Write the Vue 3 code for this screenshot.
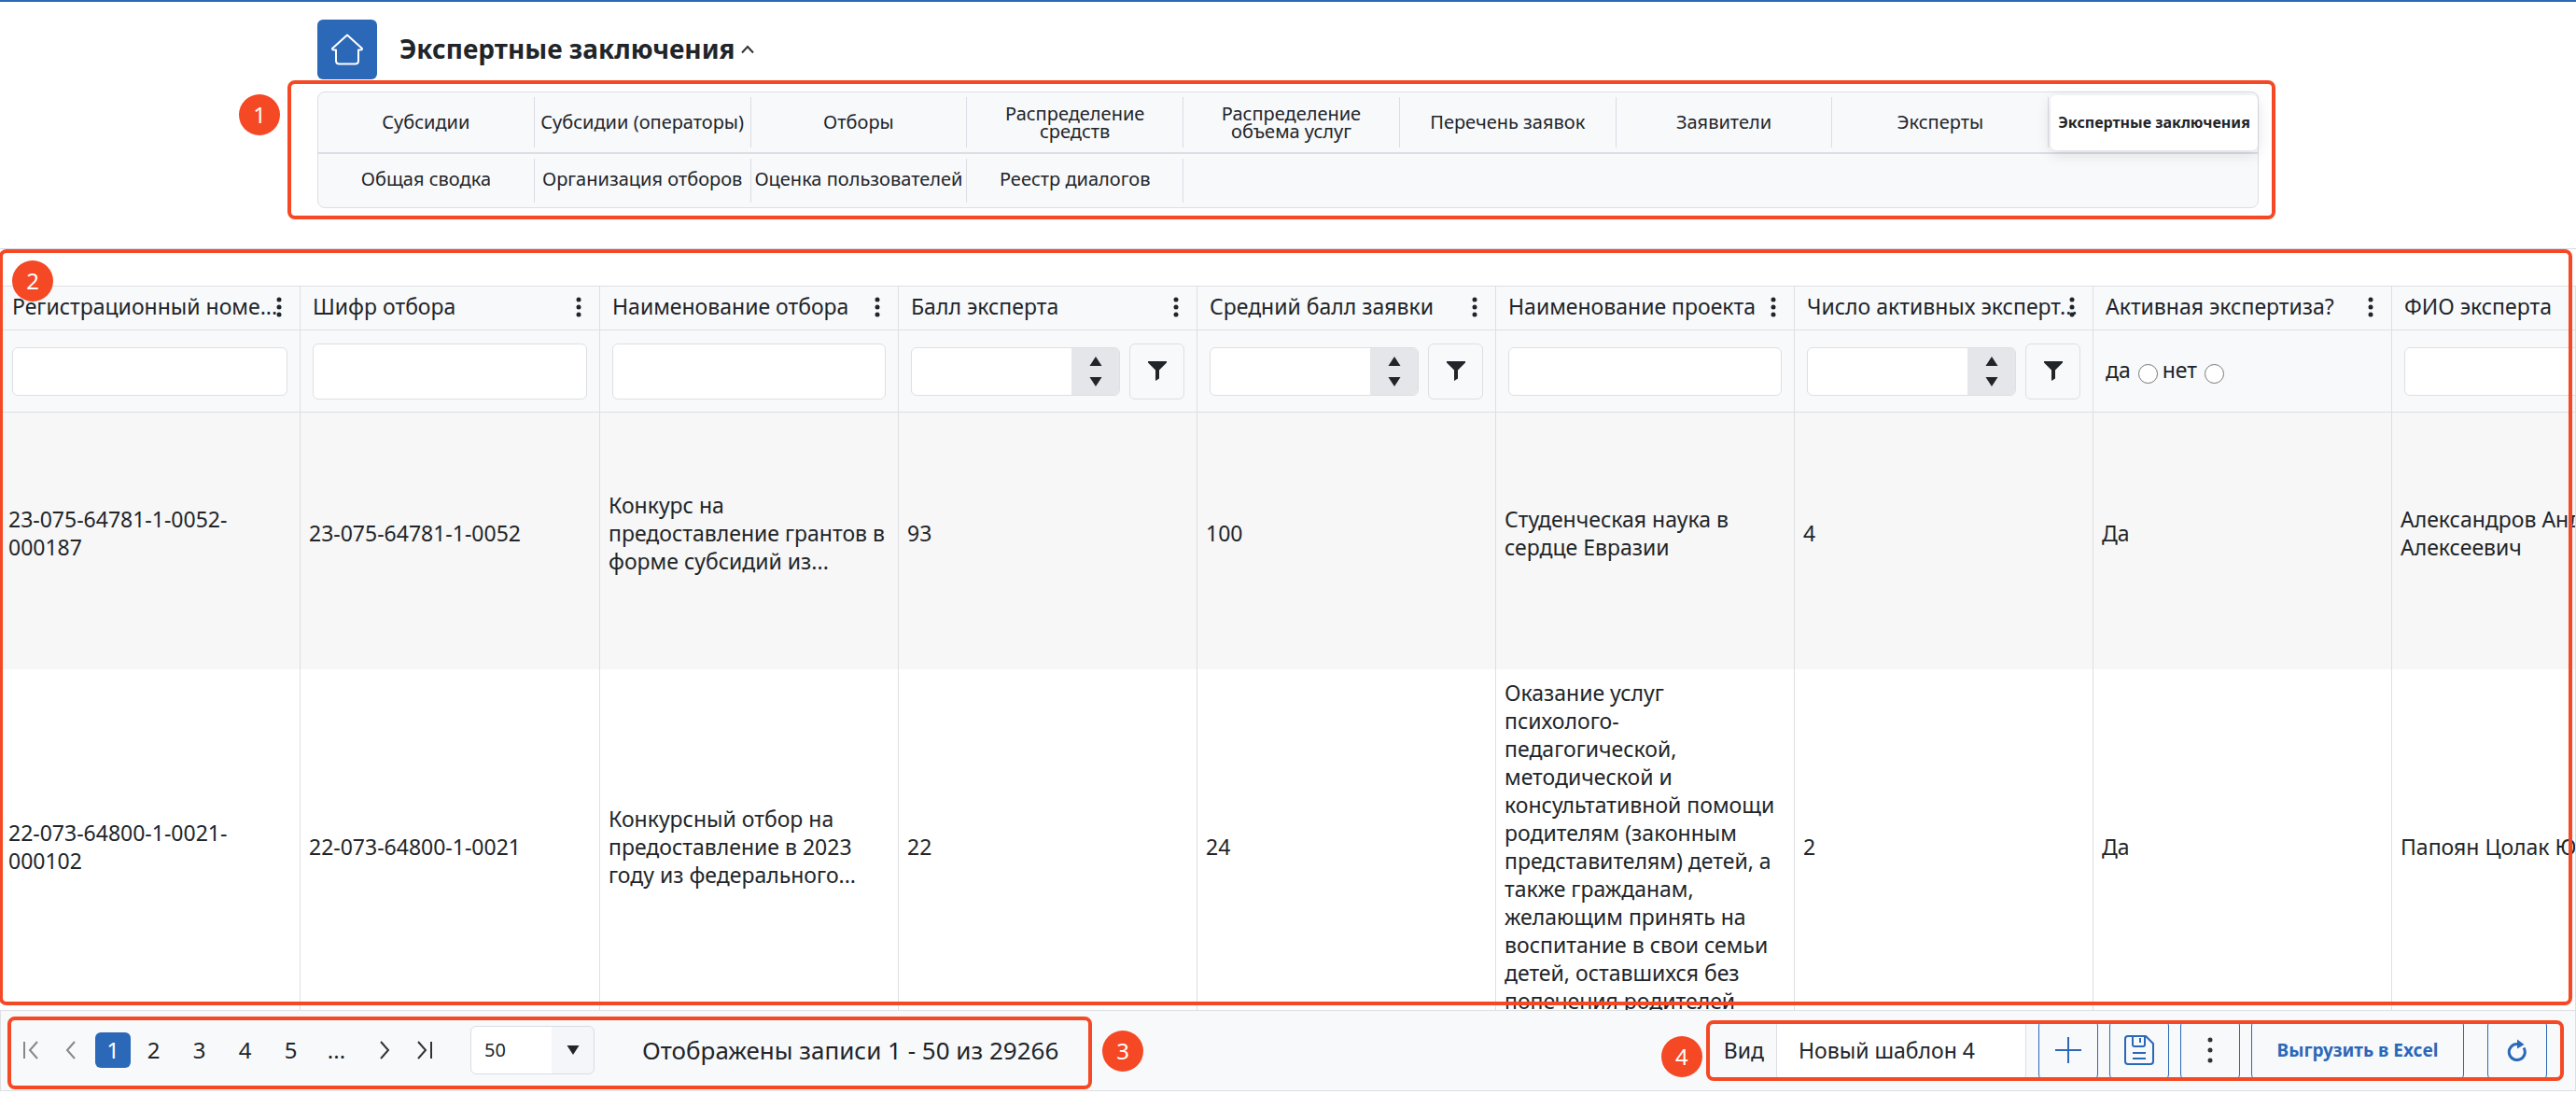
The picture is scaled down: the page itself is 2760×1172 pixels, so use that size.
<script setup>
import { ref } from 'vue'

const sections = [
  ['Субсидии', 'Субсидии (операторы)', 'Отборы', 'Распределение средств', 'Распределение объема услуг', 'Перечень заявок', 'Заявители', 'Эксперты', 'Экспертные заключения'],
  ['Общая сводка', 'Организация отборов', 'Оценка пользователей', 'Реестр диалогов'],
]
const activeSection = 'Экспертные заключения'

const columns = [
  { key: 'reg', title: 'Регистрационный номе...', filter: 'text' },
  { key: 'code', title: 'Шифр отбора', filter: 'text', tall: true },
  { key: 'selection', title: 'Наименование отбора', filter: 'text', tall: true },
  { key: 'score', title: 'Балл эксперта', filter: 'number' },
  { key: 'average', title: 'Средний балл заявки', filter: 'number' },
  { key: 'project', title: 'Наименование проекта', filter: 'text' },
  { key: 'count', title: 'Число активных эксперт...', filter: 'number' },
  { key: 'active', title: 'Активная экспертиза?', filter: 'radio' },
  { key: 'expert', title: 'ФИО эксперта', filter: 'text' },
]

const rows = [
  {
    reg: ['23-075-64781-1-0052-', '000187'],
    code: ['23-075-64781-1-0052'],
    selection: ['Конкурс на', 'предоставление грантов в', 'форме субсидий из...'],
    score: ['93'],
    average: ['100'],
    project: ['Студенческая наука в', 'сердце Евразии'],
    count: ['4'],
    active: ['Да'],
    expert: ['Александров Андрей', 'Алексеевич'],
  },
  {
    reg: ['22-073-64800-1-0021-', '000102'],
    code: ['22-073-64800-1-0021'],
    selection: ['Конкурсный отбор на', 'предоставление в 2023', 'году из федерального...'],
    score: ['22'],
    average: ['24'],
    project: ['Оказание услуг', 'психолого-', 'педагогической,', 'методической и', 'консультативной помощи', 'родителям (законным', 'представителям) детей, а', 'также гражданам,', 'желающим принять на', 'воспитание в свои семьи', 'детей, оставшихся без', 'попечения родителей'],
    count: ['2'],
    active: ['Да'],
    expert: ['Папоян Цолак Юрьевич'],
  },
]

const pages = ['1', '2', '3', '4', '5', '...']
const page = ref('1')
const template = ref('Новый шаблон 4')
</script>

<template>
  <div class="app">
    <header class="top">
      <div class="top-inner">
        <div class="heading">
          <a class="home" href="#" aria-label="На главную">
            <svg width="36" height="34" viewBox="0 0 36 34" fill="none" stroke="#fff" stroke-width="2" stroke-linejoin="round" stroke-linecap="round">
              <path d="M18 1.500 L34 16 Q34 17.500 32 17.500 H30 V29 Q30 32.500 26.500 32.500 H9.500 Q6 32.500 6 29 V17.500 H4 Q2 17.500 2 16 Z" />
            </svg>
          </a>
          <h1>Экспертные заключения</h1>
          <button class="collapse" aria-label="Свернуть">
            <svg width="14" height="10" viewBox="0 0 14 10" fill="none" stroke="#333" stroke-width="2"><path d="M1 8.500 L7 2 L13 8.500" /></svg>
          </button>
        </div>
        <nav class="sections">
          <div v-for="(line, i) in sections" :key="i" class="line">
            <a v-for="name in line" :key="name" href="#" class="section" :class="{ active: name === activeSection }"><span>{{ name }}</span></a>
          </div>
          <div class="frame frame-nav"></div>
          <div class="mark mark-1">1</div>
        </nav>
      </div>
    </header>

    <main class="grid">
      <div class="toolbar"></div>
      <div class="scroll">
        <table>
          <colgroup>
            <col v-for="c in columns" :key="c.key" :class="'col-' + c.key" />
          </colgroup>
          <thead>
            <tr class="titles">
              <th v-for="c in columns" :key="c.key">
                <div class="title">{{ c.title }}</div>
                <button class="menu" :aria-label="'Меню: ' + c.title">
                  <svg width="6" height="22" viewBox="0 0 6 22" fill="#212529"><circle cx="3" cy="3" r="2.500" /><circle cx="3" cy="11" r="2.500" /><circle cx="3" cy="19" r="2.500" /></svg>
                </button>
              </th>
            </tr>
            <tr class="filters">
              <td v-for="c in columns" :key="c.key">
                <input v-if="c.filter === 'text'" type="text" class="field" :class="{ tall: c.tall }" :aria-label="c.title" />
                <div v-else-if="c.filter === 'number'" class="number">
                  <div class="spin">
                    <input type="text" inputmode="numeric" :aria-label="c.title" />
                    <div class="arrows">
                      <button aria-label="Больше"><svg width="14" height="10" viewBox="0 0 14 10" fill="#212529"><path d="M7 0 L13.500 10 H0.500 Z" /></svg></button>
                      <button aria-label="Меньше"><svg width="14" height="10" viewBox="0 0 14 10" fill="#212529"><path d="M0.500 0 H13.500 L7 10 Z" /></svg></button>
                    </div>
                  </div>
                  <button class="funnel" aria-label="Фильтр">
                    <svg width="20" height="21" viewBox="0 0 20 21" fill="#212529"><path d="M0 0 H20 V1.500 L12 9.500 V18.500 L8 21 V9.500 L0 1.500 Z" /></svg>
                  </button>
                </div>
                <div v-else class="choice">
                  <label>да <input type="radio" name="active" /></label>
                  <label>нет <input type="radio" name="active" /></label>
                </div>
              </td>
            </tr>
          </thead>
          <tbody>
            <tr v-for="(r, i) in rows" :key="i">
              <td v-for="c in columns" :key="c.key">
                <div v-for="t in r[c.key]" :key="t">{{ t }}</div>
              </td>
            </tr>
          </tbody>
        </table>
      </div>
      <div class="frame frame-grid"></div>
      <div class="mark mark-2">2</div>
    </main>

    <footer class="footer">
      <div class="pager">
        <button class="nav off" aria-label="Первая страница"><svg width="18" height="20" viewBox="0 0 18 20"><path d="M2 1 V19 M16 1 L8 10 L16 19" /></svg></button>
        <button class="nav off" aria-label="Предыдущая страница"><svg width="12" height="20" viewBox="0 0 12 20"><path d="M10 1 L2 10 L10 19" /></svg></button>
        <div class="pages">
          <button v-for="p in pages" :key="p" class="page" :class="{ current: p === page }" @click="page = p">{{ p }}</button>
        </div>
        <button class="nav" aria-label="Следующая страница"><svg width="12" height="20" viewBox="0 0 12 20"><path d="M2 1 L10 10 L2 19" /></svg></button>
        <button class="nav" aria-label="Последняя страница"><svg width="18" height="20" viewBox="0 0 18 20"><path d="M2 1 L10 10 L2 19 M16 1 V19" /></svg></button>
        <div class="size">
          <select aria-label="Записей на странице"><option>50</option></select>
          <svg width="14" height="10" viewBox="0 0 14 10" fill="#212529"><path d="M0.500 0 H13.500 L7 10 Z" /></svg>
        </div>
        <div class="info">Отображены записи 1 - 50 из 29266</div>
        <div class="frame frame-pager"></div>
        <div class="mark mark-3">3</div>
      </div>
      <div class="views">
        <label class="view-label" for="view">Вид</label>
        <input id="view" v-model="template" type="text" class="view" />
        <button class="tool" aria-label="Добавить"><svg width="28" height="28" viewBox="0 0 28 28" fill="none" stroke="#2b68b8" stroke-width="2"><path d="M14 0 V28 M0 14 H28" /></svg></button>
        <button class="tool" aria-label="Сохранить">
          <svg width="32" height="32" viewBox="0 0 32 32" fill="none" stroke="#2b68b8" stroke-width="2" stroke-linejoin="round">
            <path d="M4 1 H23 L31 9 V28 Q31 31 28 31 H4 Q1 31 1 28 V4 Q1 1 4 1 Z M9 1 V10 Q9 12 11 12 H20 Q22 12 22 10 V1 M17 3 V8 M9 19 H23 M9 25 H23" />
          </svg>
        </button>
        <button class="tool" aria-label="Ещё"><svg width="6" height="28" viewBox="0 0 6 28" fill="#333"><circle cx="3" cy="3" r="2.500" /><circle cx="3" cy="14" r="2.500" /><circle cx="3" cy="25" r="2.500" /></svg></button>
        <button class="tool excel">Выгрузить в Excel</button>
        <button class="tool refresh" aria-label="Обновить">
          <svg width="22" height="24" viewBox="0 0 22 24"><path d="M18 9.500 A8.500 8.500 0 1 1 11 5.500" fill="none" stroke="#2b68b8" stroke-width="3" /><path d="M11 0.500 L18.500 6 L11 10.500 Z" fill="#2b68b8" /></svg>
        </button>
        <div class="frame frame-views"></div>
        <div class="mark mark-4">4</div>
      </div>
    </footer>
  </div>
</template>

<style>
body {
  margin: 0;
  background: #fff;
}
</style>

<style scoped>
* {
  box-sizing: border-box;
}
.app {
  display: flex;
  flex-direction: column;
  height: 100vh;
  padding-bottom: 3px;
  overflow: hidden;
  color: #212529;
  font-family: "Noto Sans", "Open Sans", sans-serif;
  font-size: 23px;
  line-height: 30px;
}
button,
input,
select {
  margin: 0;
  padding: 0;
  border: 0;
  background: none;
  color: inherit;
  font: inherit;
}
svg {
  display: block;
}
a {
  color: inherit;
  text-decoration: none;
}

.top {
  height: 267px;
  padding-top: 19px;
  border-top: 2px solid #2b68b8;
  border-bottom: 1px solid #d5d8df;
}
.top-inner {
  max-width: 2080px;
  margin: 0 auto;
}
.heading {
  display: flex;
  align-items: center;
  height: 64px;
}
.home {
  display: flex;
  align-items: center;
  justify-content: center;
  width: 64px;
  height: 64px;
  border-radius: 6px;
  background: #2b68b8;
}
h1 {
  margin: 0 6px 0 24px;
  padding-bottom: 2px;
  font-size: 28px;
  line-height: 40px;
  font-weight: 700;
}
.sections {
  position: relative;
  margin-top: 13px;
  border: 1px solid #dcdde5;
  border-radius: 8px;
  background: #f8f9fb;
}
.line {
  display: grid;
  grid-template-columns: repeat(8, 232fr) 224fr;
  height: 57px;
}
.line:first-child {
  height: 66px;
  border-bottom: 2px solid #dcdde5;
}
.section {
  display: flex;
  align-items: center;
  justify-content: center;
  margin: 5px 0;
  padding-bottom: 4px;
  border-right: 1px solid #dcdde5;
  font-size: 20px;
  line-height: 19px;
  text-align: center;
}
.line:first-child .section {
  padding-bottom: 1px;
}
.section span {
  max-width: 224px;
}
.section.active {
  margin: 3px 0 2px 2px;
  border: 0;
  border-radius: 6px;
  background: #fff;
  box-shadow: 0 4px 16px rgba(0, 0, 0, 0.12);
  font-size: 16px;
  font-weight: 700;
}

.frame {
  position: absolute;
  border: 4px solid #f54824;
  border-radius: 8px;
  pointer-events: none;
}
.mark {
  position: absolute;
  width: 44px;
  height: 44px;
  border-radius: 50%;
  background: #f54824;
  color: #fff;
  font-family: "Noto Sans", sans-serif;
  font-size: 24px;
  line-height: 44px;
  text-align: center;
}
.frame-nav {
  inset: -13px -19px -13px -33px;
}
.mark-1 {
  top: 2px;
  left: -85px;
}

.grid {
  position: relative;
  display: flex;
  flex: 1;
  flex-direction: column;
  min-height: 0;
}
.frame-grid {
  inset: 0 4px 5px -1px;
}
.mark-2 {
  top: 12px;
  left: 13px;
}
.toolbar {
  flex: none;
  height: 39px;
}
.scroll {
  flex: 1;
  min-height: 0;
  overflow: hidden;
  border-right: 1px solid #dedfe2;
}
table {
  width: 2883px;
  border-collapse: separate;
  border-spacing: 0;
  table-layout: fixed;
}
col {
  width: 320px;
}
.col-reg {
  width: 322px;
}
.col-code {
  width: 321px;
}
th,
td {
  padding: 0 13px;
  border-right: 1px solid #dedfe2;
  text-align: left;
  font-weight: 400;
}
thead th,
thead td {
  background: #f8f9fb;
  border-bottom: 1px solid #dedfe2;
}
.titles th {
  position: relative;
  height: 48px;
  padding-bottom: 4px;
  border-top: 1px solid #dedfe2;
}
.title {
  white-space: nowrap;
}
.menu {
  position: absolute;
  top: 11px;
  right: 19px;
}
.filters td {
  height: 88px;
}
.field {
  display: block;
  width: 100%;
  height: 52px;
  padding: 0 12px;
  border: 1px solid #dedfe2;
  border-radius: 6px;
  background: #fff;
}
.field.tall {
  height: 60px;
}
.number {
  display: flex;
  align-items: center;
  gap: 10px;
}
.spin {
  display: flex;
  flex: 1;
  height: 52px;
  overflow: hidden;
  border: 1px solid #dedfe2;
  border-radius: 6px;
  background: #fff;
}
.spin input {
  flex: 1;
  min-width: 0;
  padding: 0 12px;
}
.arrows {
  display: flex;
  flex-direction: column;
  align-items: center;
  justify-content: center;
  gap: 12px;
  width: 51px;
  background: #e5e6ea;
}
.funnel {
  display: flex;
  align-items: center;
  justify-content: center;
  width: 59px;
  height: 60px;
  border: 1px solid #dedfe2;
  border-radius: 6px;
}
.choice {
  display: flex;
  gap: 5px;
  padding-bottom: 4px;
}
.choice label {
  display: flex;
  align-items: center;
  gap: 8px;
}
.choice input {
  width: 21px;
  height: 21px;
  margin-top: 9px;
}
tbody td {
  height: 380px;
  padding: 0 9px;
  white-space: nowrap;
  overflow: hidden;
}
tbody tr:first-child td {
  height: 275px;
  padding-bottom: 18px;
  background: #f7f7f7;
}

.footer {
  display: flex;
  flex: none;
  justify-content: space-between;
  height: 87px;
  border: 1px solid #dedfe2;
  background: #f8f9fb;
}
.pager {
  position: relative;
  display: flex;
  align-items: center;
  height: 84px;
  padding-left: 10px;
}
.nav {
  display: flex;
  align-items: center;
  justify-content: center;
  width: 43px;
  height: 38px;
}
.nav svg {
  fill: none;
  stroke: #333;
  stroke-width: 2;
}
.nav.off svg {
  stroke: #888;
}
.pages {
  display: flex;
  margin: 0 5px;
}
.page {
  width: 49px;
  height: 38px;
  font-size: 24px;
  line-height: 38px;
}
.page.current {
  width: 38px;
  border-radius: 6px;
  background: #2b68b8;
  color: #fff;
}
.size {
  display: flex;
  position: relative;
  align-items: center;
  width: 133px;
  height: 52px;
  margin-left: 28px;
  border: 1px solid #d9dce4;
  border-radius: 6px;
  background: linear-gradient(to right, #fff 86px, #f5f6f9 86px);
}
.size select {
  width: 100%;
  height: 100%;
  padding-left: 14px;
  appearance: none;
  font-size: 20px;
}
.size svg {
  position: absolute;
  right: 15px;
  pointer-events: none;
}
.info {
  min-width: 457px;
  margin-left: 51px;
  font-size: 26px;
  white-space: nowrap;
}
.frame-pager {
  inset: 6px -25px 0 7px;
}
.mark-3 {
  top: 21px;
  right: -80px;
}
.views {
  position: relative;
  display: flex;
  align-items: center;
  height: 84px;
  padding-right: 30px;
}
.view-label {
  margin-right: 13px;
}
.view {
  width: 268px;
  height: 64px;
  margin-right: 13px;
  padding: 0 23px;
  border: 1px solid #dedfe2;
  border-radius: 6px;
  background: #fff;
}
.tool {
  display: flex;
  align-items: center;
  justify-content: center;
  width: 64px;
  height: 64px;
  margin-right: 12px;
  border: 1px solid #2b68b8;
  border-radius: 6px;
}
.excel {
  width: 228px;
  margin-right: 25px;
  color: #2b68b8;
  font-size: 19px;
  font-weight: 700;
}
.refresh {
  margin-right: 0;
}
.frame-views {
  inset: 10px 12px 9px -19px;
}
.mark-4 {
  top: 27px;
  left: -67px;
}
</style>
